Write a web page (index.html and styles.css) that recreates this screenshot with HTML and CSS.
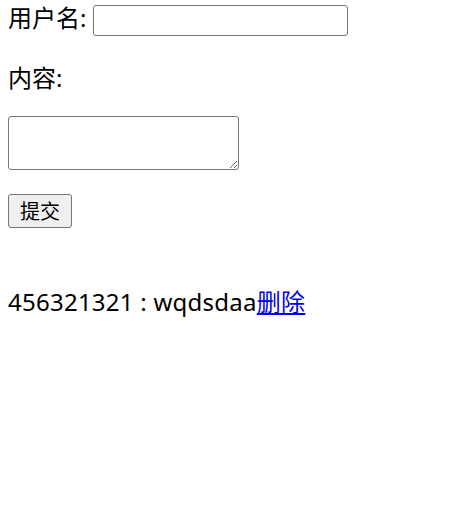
FILE: index.html
```html
<!DOCTYPE html>
<html>
<head>
	<meta charset="utf-8">
	<title>留言</title>
	<link rel="stylesheet" href="styles.css">
</head>
<body>
	<form class="msgForm" onsubmit="return false">
		<div class="field">
			<label for="user">用户名:</label>
			<input id="user" type="text">
		</div>
		<p class="label">内容:</p>
		<textarea class="content"></textarea>
		<div class="actions">
			<button type="submit">提交</button>
		</div>
	</form>
	<ul class="msgList">
		<li>456321321 : wqdsdaa<a href="javascript:void(0)">删除</a></li>
	</ul>
</body>
</html>
```

FILE: styles.css
```css
*{
	margin: 0px;
	padding: 0px;
}
body{
	padding: 0 8px;
	font: 24px/36px "Noto Sans", "Noto Sans CJK SC", sans-serif;
	color: #000;
}
.field{
	display: flex;
	align-items: flex-start;
	gap: 7px;
}
.field input{
	width: 255px;
	height: 31px;
	margin-top: 5px;
	box-sizing: border-box;
	border: 1px solid #767676;
	border-radius: 3px;
	font-size: 20px;
}
.label{
	margin-top: 24px;
}
.content{
	display: block;
	width: 231px;
	height: 54px;
	box-sizing: border-box;
	border: 1px solid #767676;
	border-radius: 3px;
	margin-top: 20px;
	font-size: 20px;
}
.actions{
	margin-top: 22px;
}
.actions button{
	width: 64px;
	height: 34px;
	box-sizing: border-box;
	background: #efefef;
	border: 1px solid #767676;
	border-radius: 3px;
	font: 20px/1 "Noto Sans CJK SC", sans-serif;
	color: #000;
}
.msgList{
	list-style: none;
	margin-top: 56px;
	letter-spacing: 0.25px;
}
.msgList a{
	color: #0000ee;
}
```
